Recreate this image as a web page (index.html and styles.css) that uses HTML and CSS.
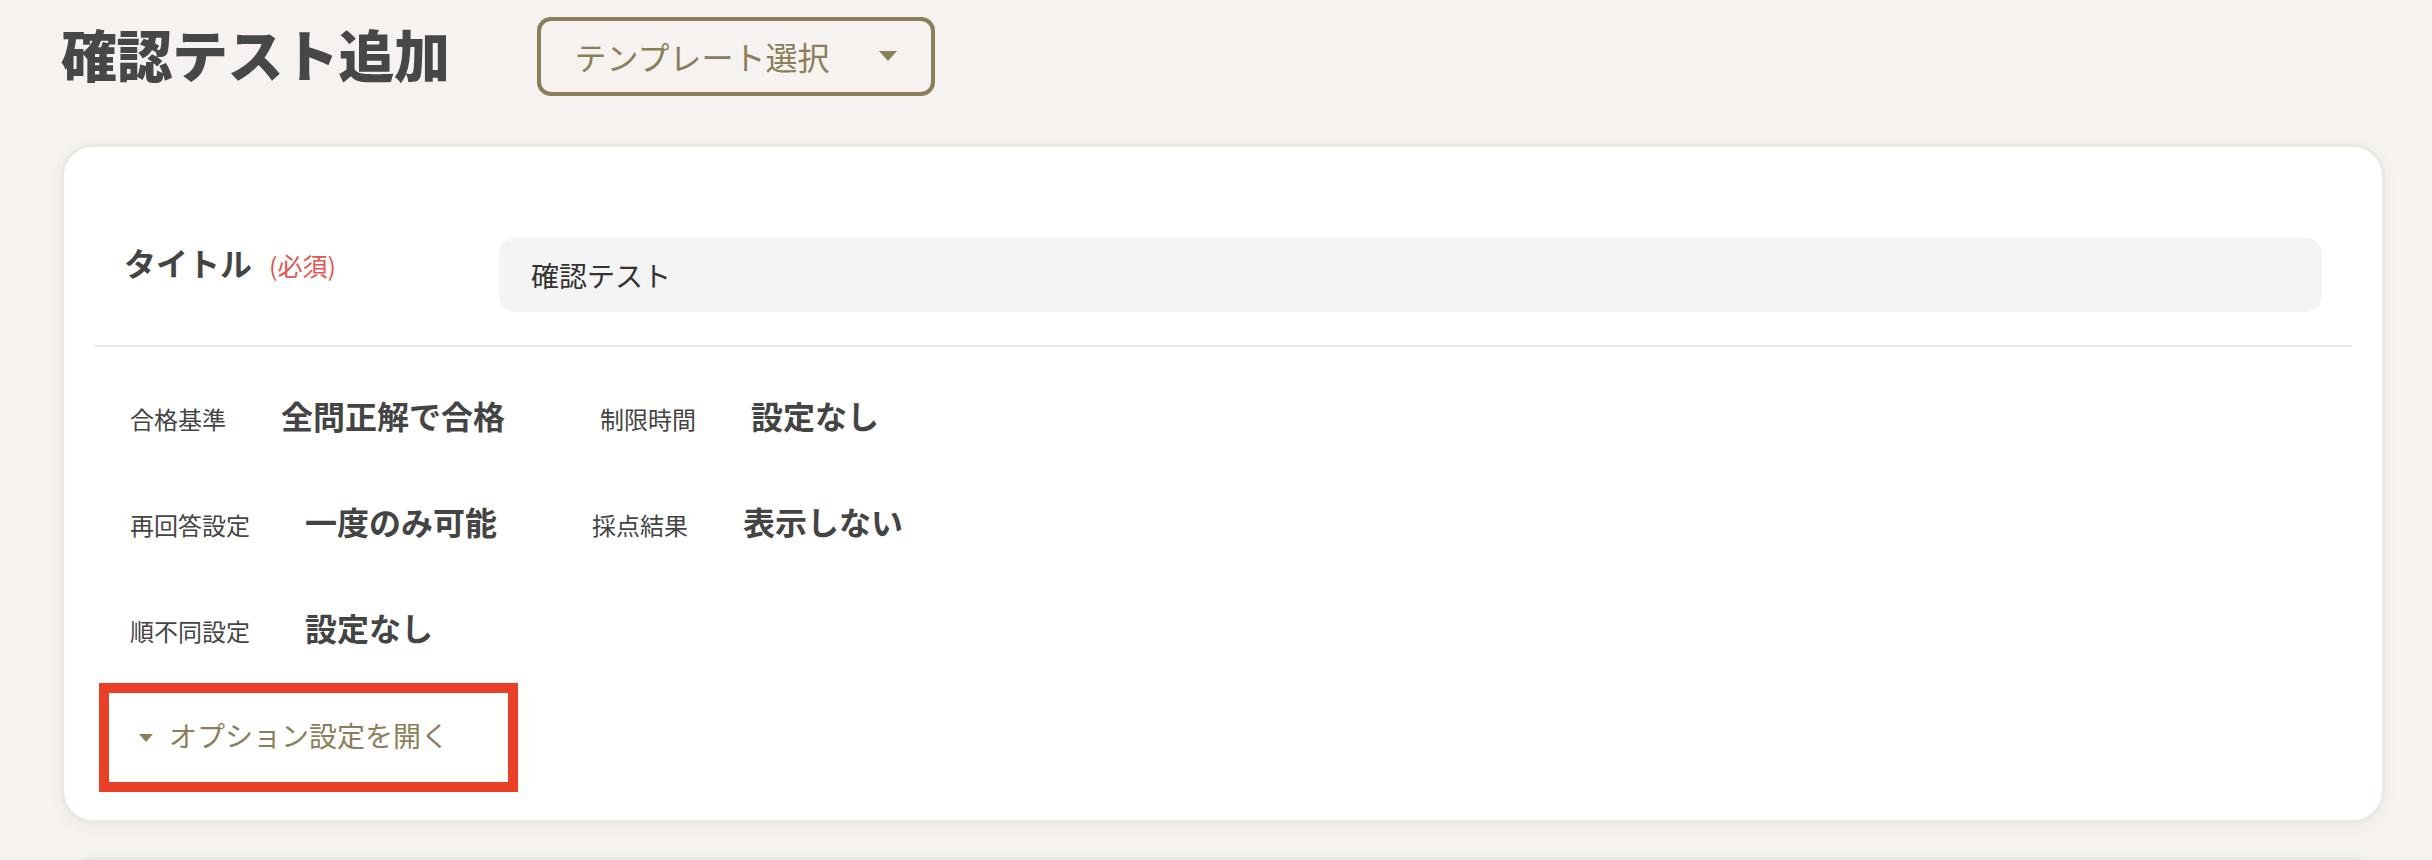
FILE: index.html
```html
<!DOCTYPE html>
<html lang="ja">
<head>
<meta charset="utf-8">
<title>確認テスト追加</title>
<link rel="stylesheet" href="styles.css">
</head>
<body>
<div class="page">
  <header class="page-header">
    <h1 class="page-title">確認テスト追加</h1>
    <button class="template-select" type="button">
      <span class="template-select-label">テンプレート選択</span>
      <svg class="caret caret-lg" viewBox="0 0 18 10" aria-hidden="true"><polygon points="0,0 18,0 9,10"/></svg>
    </button>
  </header>

  <section class="card">
    <div class="title-row">
      <div class="field-label">
        <span class="field-name">タイトル</span>
        <span class="required">(必須)</span>
      </div>
      <div class="text-input">確認テスト</div>
    </div>
    <div class="divider"></div>
    <div class="details">
      <div class="detail-row">
        <div class="detail-item"><span class="detail-label">合格基準</span><span class="detail-value">全問正解で合格</span></div>
        <div class="detail-item"><span class="detail-label">制限時間</span><span class="detail-value">設定なし</span></div>
      </div>
      <div class="detail-row">
        <div class="detail-item"><span class="detail-label">再回答設定</span><span class="detail-value">一度のみ可能</span></div>
        <div class="detail-item"><span class="detail-label">採点結果</span><span class="detail-value">表示しない</span></div>
      </div>
      <div class="detail-row">
        <div class="detail-item"><span class="detail-label">順不同設定</span><span class="detail-value">設定なし</span></div>
      </div>
      <div class="option-toggle">
        <svg class="caret caret-sm" viewBox="0 0 14 8" aria-hidden="true"><polygon points="0,0 14,0 7,8"/></svg>
        <span class="option-toggle-label">オプション設定を開く</span>
      </div>
    </div>
  </section>

  <section class="card card-next"></section>
</div>
</body>
</html>
```

FILE: styles.css
```css
* { box-sizing: border-box; }

html, body {
  margin: 0;
  padding: 0;
  background: #f5f2ef;
  font-family: "Noto Sans CJK JP", "Noto Sans", sans-serif;
  color: #444;
  overflow: hidden;
}

.page {
  width: 2432px;
  height: 860px;
  padding: 17px 47px 0 61px;
  overflow: hidden;
}

.page-header {
  display: flex;
  align-items: center;
  gap: 87px;
  height: 79px;
}

.page-title {
  margin: -8px 0 0 0;
  font-size: 56px;
  font-weight: 900;
  line-height: 64px;
  color: #474747;
  letter-spacing: -0.5px;
}

.template-select {
  display: flex;
  align-items: center;
  justify-content: space-between;
  width: 398px;
  height: 79px;
  padding: 0 34px 0 34px;
  border: 4px solid #8b7e59;
  border-radius: 14px;
  background: transparent;
  font-family: inherit;
  cursor: pointer;
}

.template-select-label {
  font-size: 32px;
  color: #8b7e59;
  line-height: 1;
  margin-top: -2px;
}

.caret { fill: #8b7e59; display: block; }
.caret-lg { width: 18px; height: 10px; margin-top: -2px; }
.caret-sm { width: 14px; height: 8px; }

.card {
  margin-top: 48px;
  width: 2324px;
  background: #fff;
  border: 3px solid #ebe9e4;
  border-radius: 32px;
  box-shadow: 0 4px 14px rgba(120, 110, 90, 0.06);
  padding: 0 30px 28px;
}

.title-row {
  display: flex;
  align-items: flex-start;
  padding: 91px 30px 33px;
}

.field-label {
  display: flex;
  align-items: baseline;
  width: 375px;
  flex: none;
  line-height: 48px;
}

.field-name {
  font-size: 32px;
  font-weight: 700;
  color: #444;
}

.required {
  margin-left: 17px;
  font-size: 25px;
  color: #e0574f;
}

.text-input {
  flex: 1;
  height: 74px;
  background: #f4f4f4;
  border-radius: 16px;
  padding: 0 32px;
  display: flex;
  align-items: center;
  font-size: 28px;
  color: #333;
}

.divider {
  height: 2px;
  background: #e9e8e3;
}

.details {
  padding: 44px 0 0 36px;
}

.detail-row {
  display: flex;
  gap: 95px;
  height: 48px;
  margin-bottom: 58px;
}

.detail-item {
  display: flex;
  align-items: baseline;
  gap: 55px;
  height: 48px;
  line-height: 48px;
}

.detail-label {
  font-size: 24px;
  color: #444;
}

.detail-value {
  font-size: 32px;
  font-weight: 700;
  color: #444;
}

.option-toggle {
  display: flex;
  align-items: center;
  gap: 16px;
  width: 419px;
  height: 109px;
  margin: -26px 0 0 -31px;
  padding: 0 0 0 30px;
  border: 10px solid #ea4027;
}

.option-toggle-label {
  font-size: 28px;
  font-weight: 400;
  color: #8b7e59;
  line-height: 1;
  margin-top: -5px;
}

.card-next {
  margin-top: 34px;
  height: 200px;
}
```
